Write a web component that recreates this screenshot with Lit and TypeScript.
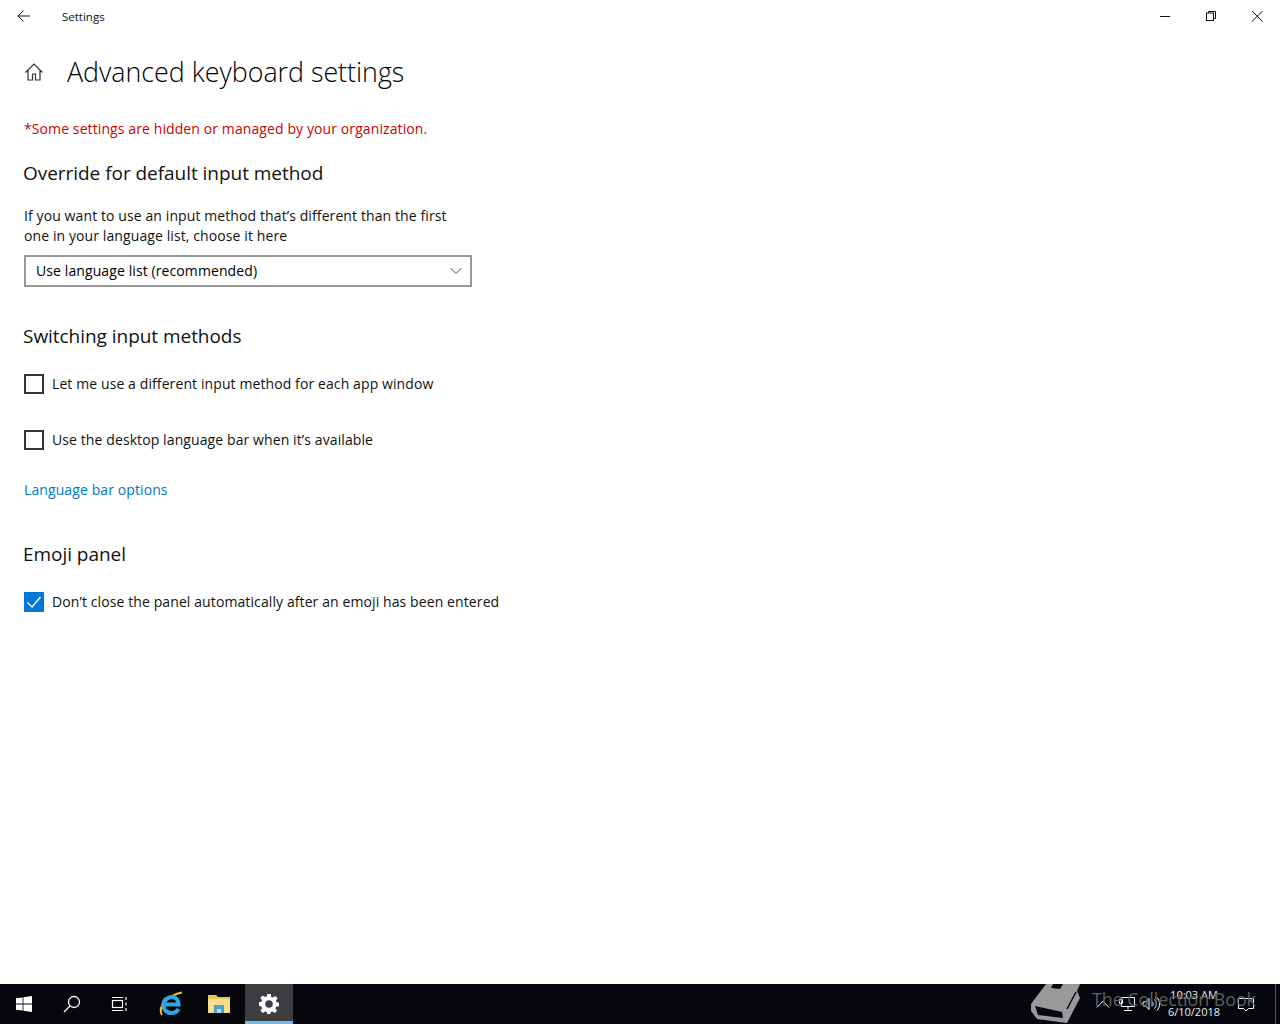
import { LitElement, html, css } from "lit";
import { customElement } from "lit/decorators.js";

@customElement("app-root")
export class AppRoot extends LitElement {
  static styles = css`
    :host { display: flex; flex-direction: column; height: 1024px; width: 1280px; overflow: hidden; background: #fff; color: #000; font-family: "Open Sans", "Noto Sans", sans-serif; font-size: 14px; position: relative; }
    svg { display: block; }
    .titlebar { height: 32px; display: flex; align-items: center; flex: none; }
    .back { width: 48px; height: 32px; display: flex; align-items: center; justify-content: center; }
    .apptitle { margin-left: 14px; font-size: 11.5px; flex: 1; color: #111; }
    .winbtn { width: 46px; height: 32px; display: flex; align-items: center; justify-content: center; }
    .main { flex: 1; padding: 0 0 0 24px; min-height: 0; }
    .pagehead { display: flex; align-items: center; height: 80px; }
    .home { width: 20px; margin-right: 23px; }
    h1 { font-weight: 300; font-size: 26.8px; margin: 0; line-height: 36px; color: #000; white-space: nowrap; margin-top: -1px; }
    .warn { color: #c50500; height: 20px; line-height: 20px; margin-top: 7px; letter-spacing: 0.1px; white-space: nowrap; }
    h2 { font-weight: 400; font-size: 19px; line-height: 28px; margin: 0 0 0 -1px; color: #111; white-space: nowrap; letter-spacing: -0.04px; }
    .s1 { margin-top: 20px; }
    .desc { margin-top: 19px; line-height: 20px; letter-spacing: 0.1px; color: #111; white-space: nowrap; }
    .select { box-sizing: border-box; width: 448px; height: 32px; margin-top: 9px; border: 2px solid #999; display: flex; align-items: center; justify-content: space-between; padding: 0 8px 2px 10px; letter-spacing: 0.1px; }
    .select svg { margin-top: 2px; }
    .s2 { margin-top: 35px; }
    .check { display: flex; align-items: center; height: 20px; gap: 8px; white-space: nowrap; letter-spacing: 0.1px; color: #111; }
    .check .lbl { margin-top: -2px; }
    .box { box-sizing: border-box; width: 20px; height: 20px; border: 2px solid #333; flex: none; display: flex; align-items: center; justify-content: center; }
    .box.on { background: #0078d7; border-color: #0078d7; }
    .c1 { margin-top: 24px; }
    .c2 { margin-top: 36px; }
    .link { color: #0078c8; margin-top: 30px; height: 20px; line-height: 20px; letter-spacing: 0.1px; }
    .s3 { margin-top: 40px; }
    .taskbar { height: 40px; flex: none; background: #05070c; display: flex; align-items: stretch; position: relative; color: #fff; }
    .tb { width: 48px; display: flex; align-items: center; justify-content: center; box-sizing: border-box; }
    .tb.ie { margin-left: 3px; }
    .tb.active { background: #3b3d41; border-bottom: 3px solid #76b9ed; padding-top: 3px; margin-left: 2px; }
    .spacer { flex: 1; }
    .tray { width: 24px; display: flex; align-items: center; justify-content: center; }
    .clock { width: 62px; font-size: 11px; line-height: 17px; text-align: center; padding-top: 2px; color: #eee; box-sizing: border-box; white-space: nowrap; }
    .notify { width: 42px; display: flex; align-items: center; justify-content: center; margin-right: 8px; }
    .desk { width: 4px; border-left: 1px solid #555; }
    .wm { position: absolute; left: 1030px; top: 0; height: 40px; display: flex; align-items: center; gap: 10px; pointer-events: none; }
    .wmtext { color: #5d5f62; font-size: 17.8px; white-space: nowrap; margin-top: -10px; }
  `;

  render() {
    return html`
      <div class="titlebar">
        <div class="back"><svg width="16" height="16" viewBox="0 0 16 16" fill="none" stroke="#111" stroke-width="1"><path d="M14 8H2M7.500 2.500 2 8l5.500 5.500"/></svg></div>
        <div class="apptitle">Settings</div>
        <div class="winbtn"><svg width="12" height="12" viewBox="0 0 12 12" stroke="#111" fill="none"><path d="M1 6.500h10"/></svg></div>
        <div class="winbtn"><svg width="12" height="12" viewBox="0 0 12 12" stroke="#111" fill="none"><rect x="1.500" y="3" width="7" height="7.500"/><path d="M3.500 3V1.500h7v7H8.500"/></svg></div>
        <div class="winbtn"><svg width="12" height="12" viewBox="0 0 12 12" stroke="#111" fill="none"><path d="M1 1l10.500 10.500M11.500 1 1 11.500"/></svg></div>
      </div>
      <div class="main">
        <div class="pagehead">
          <div class="home"><svg width="20" height="20" viewBox="0 0 20 20" fill="none" stroke="#333" stroke-width="1.200"><path d="M1.500 10.500 10 2l8.500 8.500M4 8v10h4.500v-6h3v6H16V8"/></svg></div>
          <h1>Advanced keyboard settings</h1>
        </div>
        <div class="warn">*Some settings are hidden or managed by your organization.</div>
        <h2 class="s1">Override for default input method</h2>
        <div class="desc">If you want to use an input method that’s different than the first<br />one in your language list, choose it here</div>
        <div class="select">
          <span>Use language list (recommended)</span>
          <svg width="12" height="8" viewBox="0 0 12 8" fill="none" stroke="#555"><path d="M.5 1 6 6.500 11.500 1"/></svg>
        </div>
        <h2 class="s2">Switching input methods</h2>
        <div class="check c1"><span class="box"></span><span class="lbl">Let me use a different input method for each app window</span></div>
        <div class="check c2"><span class="box"></span><span class="lbl">Use the desktop language bar when it’s available</span></div>
        <div class="link">Language bar options</div>
        <h2 class="s3">Emoji panel</h2>
        <div class="check c1"><span class="box on"><svg width="16" height="16" viewBox="0 0 16 16" fill="none" stroke="#fff" stroke-width="1.400"><path d="M1.500 8.500 6 13 14.500 3"/></svg></span><span class="lbl">Don’t close the panel automatically after an emoji has been entered</span></div>
      </div>
      <div class="taskbar">
        <div class="tb"><svg width="16" height="16" viewBox="0 0 16 16" fill="#fff"><path d="M0 2.300 6.600 1.400V7.500H0ZM7.400 1.300 16 0V7.500H7.400ZM0 8.400H6.600V14.600L0 13.700ZM7.400 8.400H16V16L7.400 14.700Z"/></svg></div>
        <div class="tb"><svg width="18" height="18" viewBox="0 0 18 18" fill="none" stroke="#fff" stroke-width="1.300"><circle cx="11" cy="7" r="5.500"/><path d="M7 11 1 17"/></svg></div>
        <div class="tb"><svg width="18" height="16" viewBox="0 0 18 16" fill="none" stroke="#fff" stroke-width="1.200"><rect x="1.500" y="4.500" width="10" height="7"/><path d="M1 1.500h11M1 14.500h11M15 1v3M15 6.500v3M15 12v3" /></svg></div>
        <div class="tb ie"><svg width="26" height="26" viewBox="0 0 26 26" fill="none">
          <path d="M4 24C-1 15 11 4 24 1.500" stroke="#f0bd2e" stroke-width="2"/>
          <path d="M6 13.500H20.500C20.500 8.500 17 6 13.500 6S5.500 9 5.500 14s3.500 8 8 8c3 0 5.500-1.200 7-4" stroke="#2fa6e2" stroke-width="4.200"/>
        </svg></div>
        <div class="tb"><svg width="22" height="18" viewBox="0 0 22 18"><path d="M0 0h8l2 2h12v16H0Z" fill="#e9c860"/><path d="M0 4h22v14H0Z" fill="#f9dd8a"/><path d="M6 10h10v8H6Z" fill="#4a9fd0"/><rect x="9" y="14" width="4" height="4" fill="#bde0f2"/></svg></div>
        <div class="tb active"><svg width="20" height="20" viewBox="0 0 20 20"><path fill="#fff" fill-rule="evenodd" d="M8.300 0h3.400l.5 2.900 1.600.7 2.400-1.700 2.400 2.400-1.700 2.400.7 1.600 2.400.5v3.400l-2.900.5-.7 1.600 1.700 2.400-2.400 2.400-2.400-1.700-1.600.7-.5 2.900H8.300l-.5-2.900-1.600-.7-2.400 1.700-2.400-2.400 1.700-2.400-.7-1.600L0 11.700V8.300l2.400-.5.7-1.600-1.700-2.400 2.400-2.400 2.400 1.700 1.600-.7ZM10 6.200a3.800 3.800 0 1 0 0 7.600 3.800 3.800 0 0 0 0-7.600Z"/></svg></div>
        <div class="spacer"></div>
        <div class="tray"><svg width="14" height="10" viewBox="0 0 14 10" fill="none" stroke="#fff"><path d="M1 8.500 7 2l6 6.500"/></svg></div>
        <div class="tray"><svg width="16" height="16" viewBox="0 0 16 16" fill="none" stroke="#fff"><path d="M2.500 1.500h13v9h-13ZM.5 3.500h3v4h-3ZM9 10.500v3M5 14.500h8"/></svg></div>
        <div class="tray"><svg width="18" height="14" viewBox="0 0 18 14" fill="none" stroke="#fff"><path d="M1 5h2.500L7 1.500v11L3.500 9H1ZM10 4.500c1.500 1.500 1.500 3.500 0 5M12.500 2.500c2.500 2.500 2.500 6.500 0 9M15 .5c3.500 4 3.500 9 0 13"/></svg></div>
        <div class="clock">10:03 AM<br />6/10/2018</div>
        <div class="notify"><svg width="16" height="16" viewBox="0 0 16 16" fill="none" stroke="#fff"><path d="M.5 2.500h15v10h-5L8 15l-2.500-2.500h-5Z"/></svg></div>
        <div class="desk"></div>
        <div class="wm">
          <svg width="52" height="40" viewBox="0 0 52 40">
            <path d="M16 0H50L47 7 50 14 37 39 7 35 1 27V20Z" fill="#97999b"/>
            <path d="M5 22 32 28 33 34 8 31Z" fill="#05070c"/>
            <path d="M23 0H33L30 5 21 4Z" fill="#05070c"/>
            <path d="M37 25 46 8" stroke="#05070c" stroke-width="1.500" fill="none"/>
          </svg>
          <span class="wmtext">The Collection Book</span>
        </div>
      </div>
    `;
  }
}
